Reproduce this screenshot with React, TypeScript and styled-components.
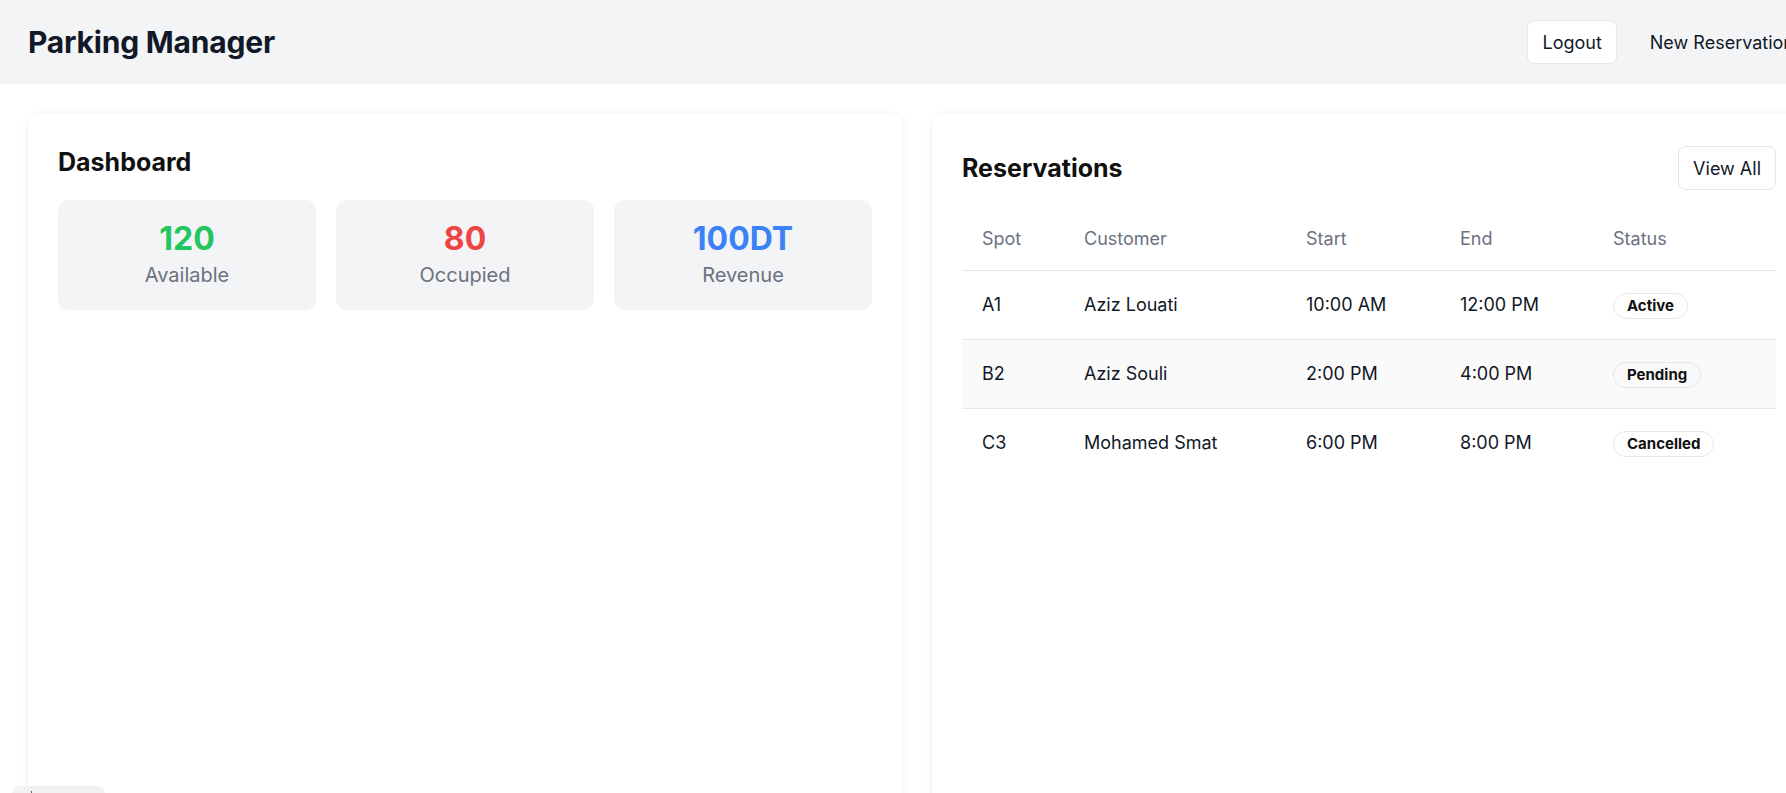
import React from 'react';
import styled, { createGlobalStyle } from 'styled-components';

const GlobalStyle = createGlobalStyle`
  html, body {
    margin: 0;
    padding: 0;
    overflow: hidden;
    background: #ffffff;
  }
  body {
    font-family: Inter, "Noto Sans", Arial, sans-serif;
    color: #111827;
  }
  * {
    box-sizing: border-box;
  }
`;

const Page = styled.div`
  width: 1834px;
  min-height: 793px;
`;

const Header = styled.header`
  height: 84px;
  background: #f3f4f6;
  display: flex;
  align-items: center;
  justify-content: space-between;
  padding: 0 25px 0 28px;
`;

const Brand = styled.h1`
  margin: 0;
  font-size: 30px;
  line-height: 36px;
  font-weight: 700;
  color: #111827;
  letter-spacing: -0.2px;
`;

const Actions = styled.div`
  display: flex;
  align-items: center;
  gap: 18px;
`;

const Button = styled.button<{ $variant?: 'outline' | 'ghost' }>`
  height: 44px;
  padding: 0 14px;
  font-family: inherit;
  font-size: 18px;
  color: #111827;
  border-radius: 7px;
  cursor: pointer;
  background: ${(p) => (p.$variant === 'ghost' ? 'transparent' : '#ffffff')};
  border: 1px solid ${(p) => (p.$variant === 'ghost' ? 'transparent' : '#e5e7eb')};
`;

const Main = styled.main`
  display: grid;
  grid-template-columns: 874px 874px;
  gap: 30px;
  padding: 30px 28px 0;
`;

const Card = styled.section`
  background: #ffffff;
  border-radius: 10px;
  box-shadow: 0 1px 8px rgba(0, 0, 0, 0.07);
  padding: 32px 30px 30px;
  min-height: 720px;
`;

const CardTitle = styled.h2`
  margin: 0;
  font-size: 25px;
  line-height: 32px;
  font-weight: 700;
  color: #111111;
`;

const StatGrid = styled.div`
  display: grid;
  grid-template-columns: repeat(3, 1fr);
  gap: 20px;
  margin-top: 22px;
`;

const StatBox = styled.div`
  background: #f3f4f6;
  border-radius: 10px;
  height: 110px;
  display: flex;
  flex-direction: column;
  align-items: center;
  justify-content: center;
`;

const StatValue = styled.div<{ $color: string }>`
  font-size: 32px;
  line-height: 36px;
  font-weight: 700;
  color: ${(p) => p.$color};
`;

const StatLabel = styled.div`
  font-size: 20px;
  line-height: 28px;
  margin-top: 4px;
  color: #6b7280;
`;

const CardHead = styled.div`
  display: flex;
  align-items: center;
  justify-content: space-between;
  margin-bottom: 19px;
`;

const Table = styled.table`
  width: 100%;
  border-collapse: collapse;
  table-layout: fixed;
  font-size: 18px;
`;

const Th = styled.th`
  text-align: left;
  font-weight: 400;
  color: #6b7280;
  padding: 16px 20px 17px;
  line-height: 28px;
  border-bottom: 1px solid #e5e7eb;
`;

const Row = styled.tr<{ $striped?: boolean; $last?: boolean }>`
  background: ${(p) => (p.$striped ? '#fafafa' : 'transparent')};
  border-bottom: ${(p) => (p.$last ? 'none' : '1px solid #e5e7eb')};
`;

const Td = styled.td`
  padding: 20px 20px;
  line-height: 28px;
  color: #111827;
  white-space: nowrap;
`;

const Badge = styled.span`
  display: inline-block;
  border: 1px solid #e5e7eb;
  border-radius: 999px;
  padding: 0 13px;
  font-size: 15px;
  line-height: 24px;
  font-weight: 700;
  color: #111111;
  vertical-align: middle;
`;

const DevTab = styled.div`
  position: fixed;
  left: 12px;
  bottom: -10px;
  width: 93px;
  height: 17px;
  border-radius: 8px;
  background: #f2f2f2;
`;

const DevMark = styled.span`
  position: absolute;
  left: 19px;
  top: 5px;
  width: 1px;
  height: 4px;
  background: #666;
`;

const stats = [
  { value: '120', label: 'Available', color: '#22c55e' },
  { value: '80', label: 'Occupied', color: '#ef4444' },
  { value: '100DT', label: 'Revenue', color: '#3b82f6' },
];

const reservations = [
  { spot: 'A1', customer: 'Aziz Louati', start: '10:00 AM', end: '12:00 PM', status: 'Active' },
  { spot: 'B2', customer: 'Aziz Souli', start: '2:00 PM', end: '4:00 PM', status: 'Pending' },
  { spot: 'C3', customer: 'Mohamed Smat', start: '6:00 PM', end: '8:00 PM', status: 'Cancelled' },
];

const App = () => {
  return (
    <>
      <GlobalStyle />
      <Page>
        <Header>
          <Brand>Parking Manager</Brand>
          <Actions>
            <Button $variant="outline">Logout</Button>
            <Button $variant="ghost">New Reservation</Button>
          </Actions>
        </Header>
        <Main>
          <Card>
            <CardTitle>Dashboard</CardTitle>
            <StatGrid>
              {stats.map((s) => (
                <StatBox key={s.label}>
                  <StatValue $color={s.color}>{s.value}</StatValue>
                  <StatLabel>{s.label}</StatLabel>
                </StatBox>
              ))}
            </StatGrid>
          </Card>
          <Card>
            <CardHead>
              <CardTitle>Reservations</CardTitle>
              <Button $variant="outline">View All</Button>
            </CardHead>
            <Table>
              <colgroup>
                <col style={{ width: 102 }} />
                <col style={{ width: 222 }} />
                <col style={{ width: 154 }} />
                <col style={{ width: 153 }} />
                <col />
              </colgroup>
              <thead>
                <tr>
                  <Th>Spot</Th>
                  <Th>Customer</Th>
                  <Th>Start</Th>
                  <Th>End</Th>
                  <Th>Status</Th>
                </tr>
              </thead>
              <tbody>
                {reservations.map((r, i) => (
                  <Row key={r.spot} $striped={i % 2 === 1} $last={i === reservations.length - 1}>
                    <Td>{r.spot}</Td>
                    <Td>{r.customer}</Td>
                    <Td>{r.start}</Td>
                    <Td>{r.end}</Td>
                    <Td>
                      <Badge>{r.status}</Badge>
                    </Td>
                  </Row>
                ))}
              </tbody>
            </Table>
          </Card>
        </Main>
      </Page>
      <DevTab>
        <DevMark />
      </DevTab>
    </>
  );
};

export default App;
